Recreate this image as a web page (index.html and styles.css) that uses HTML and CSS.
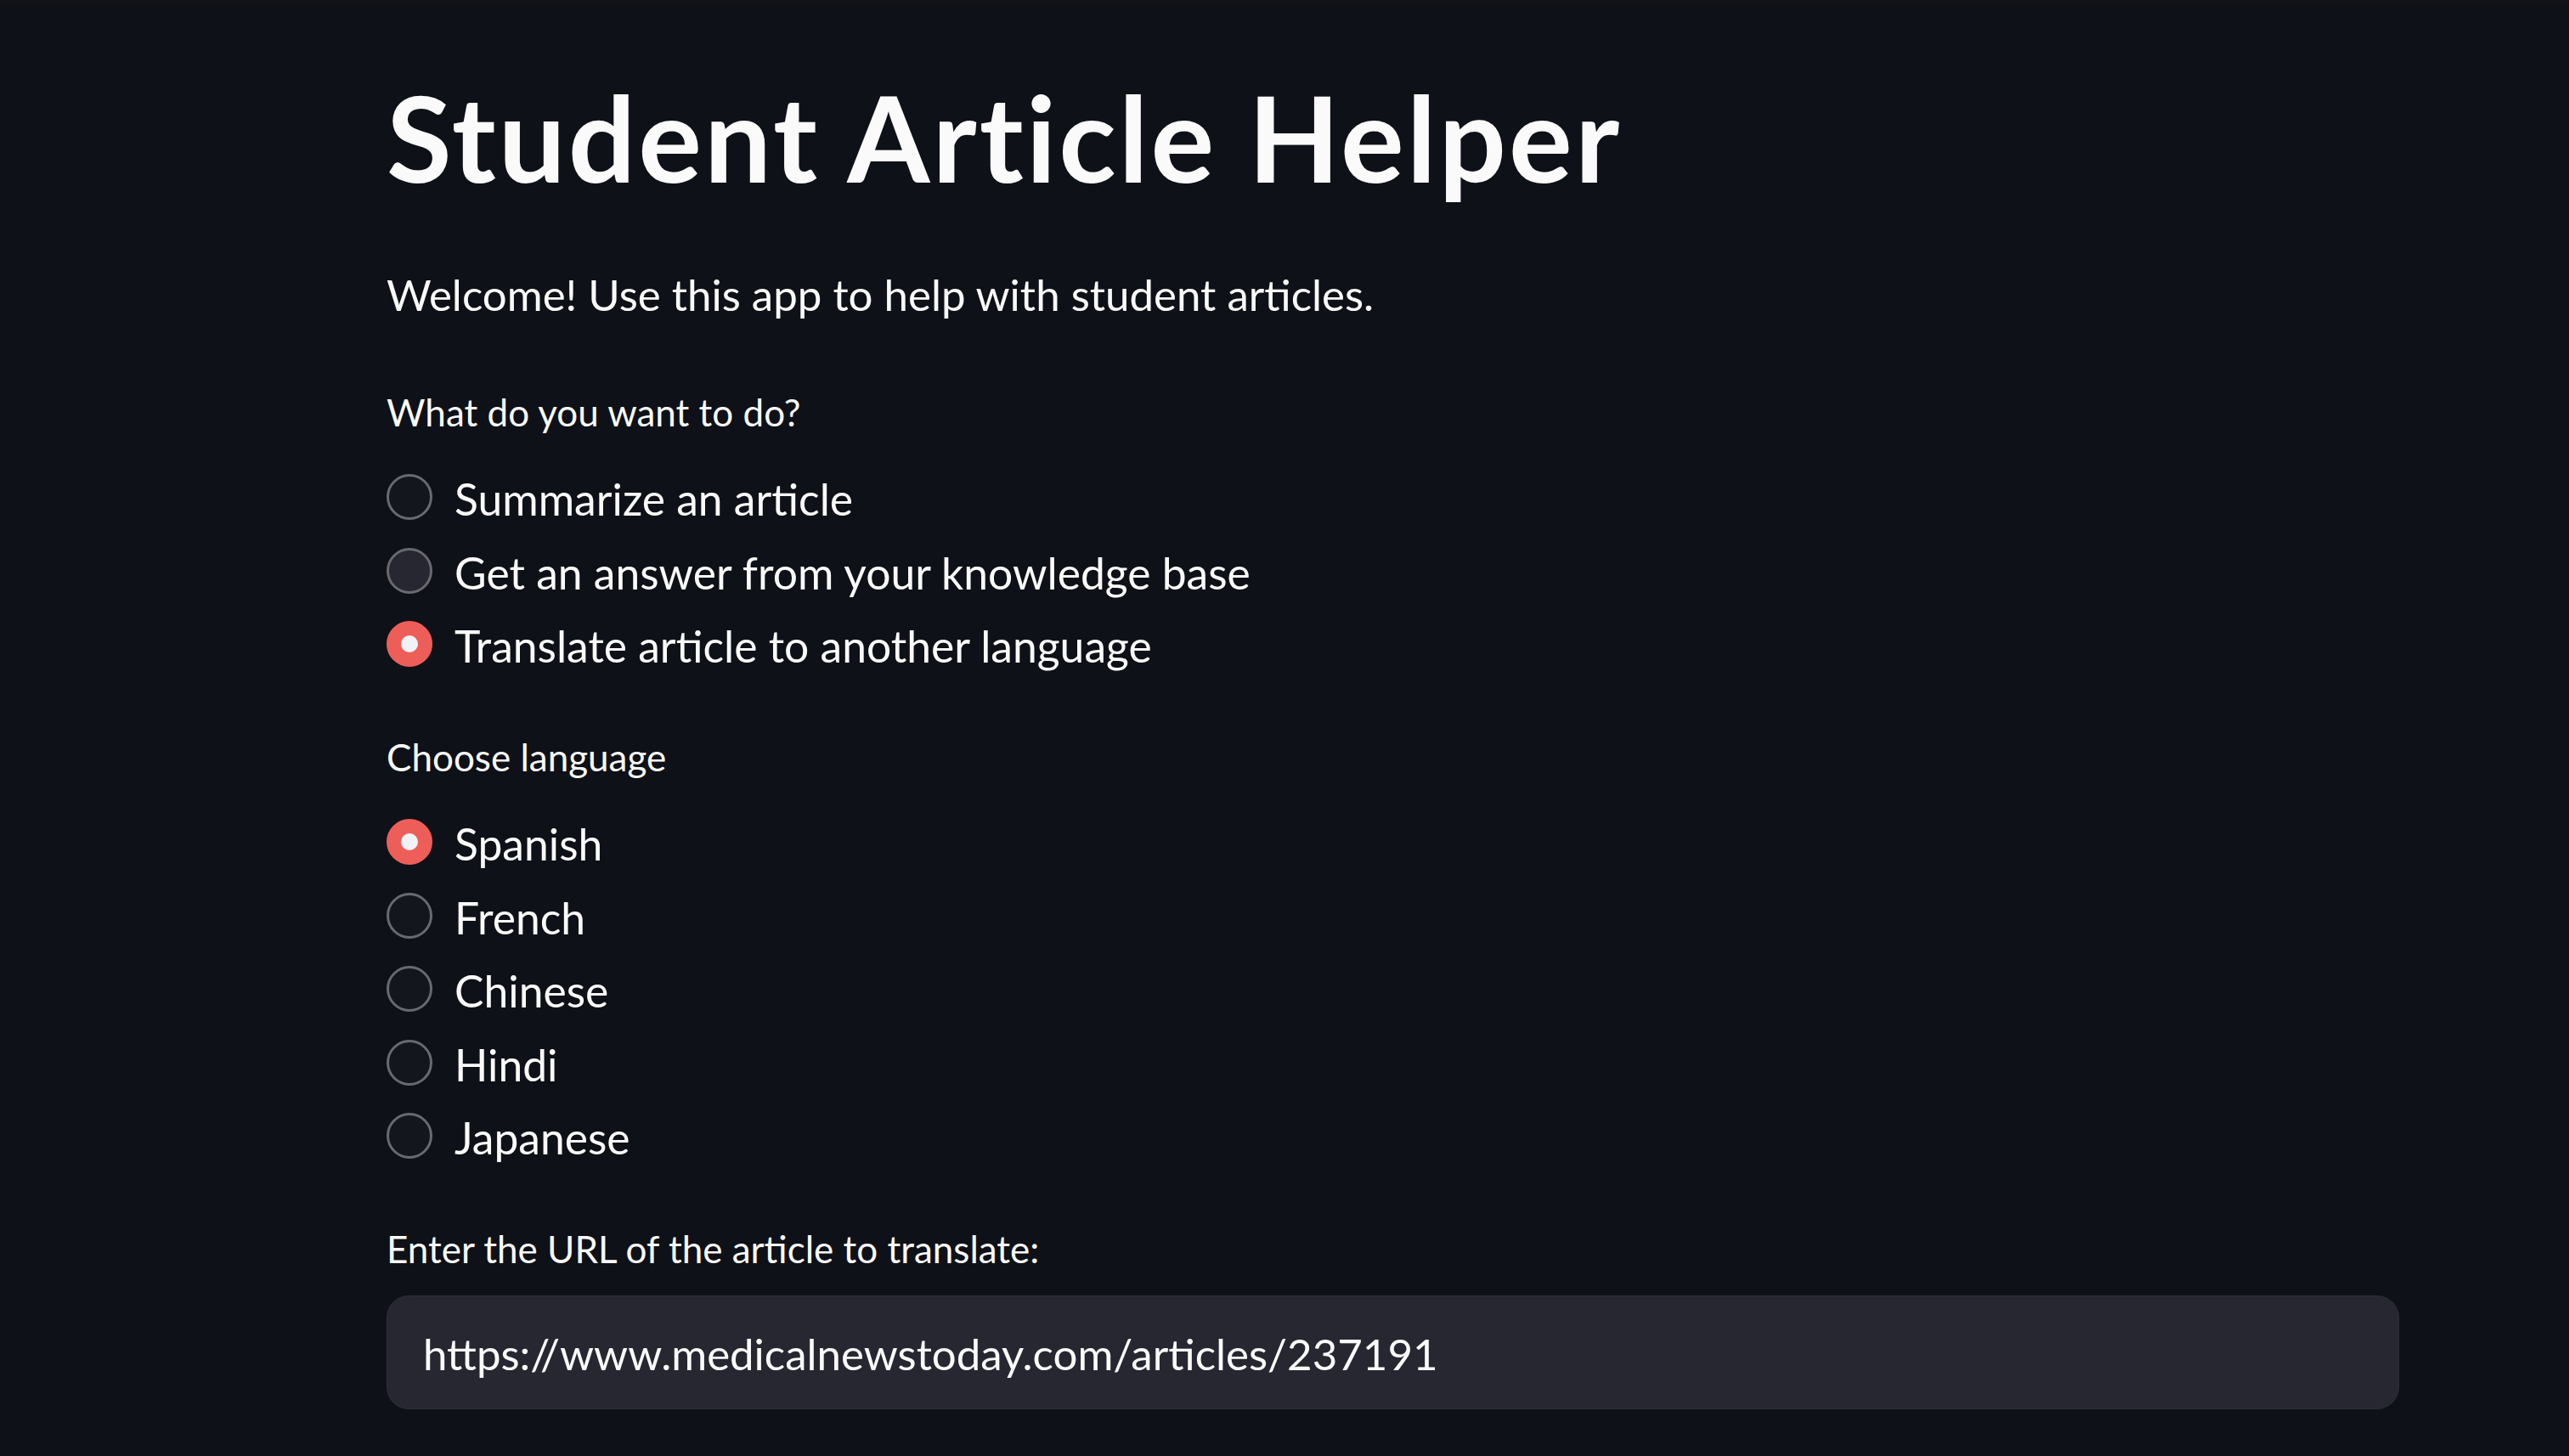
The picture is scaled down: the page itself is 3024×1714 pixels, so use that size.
FILE: index.html
```html
<!DOCTYPE html>
<html lang="en">
<head>
<meta charset="utf-8">
<title>Student Article Helper</title>
<link rel="stylesheet" href="styles.css">
</head>
<body>
<div class="top-strip"></div>
<main class="main">
  <h1 class="title">Student Article Helper</h1>
  <p class="intro">Welcome! Use this app to help with student articles.</p>

  <section class="radio-group">
    <div class="widget-label">What do you want to do?</div>
    <div class="radio-list">
      <div class="radio-row"><span class="radio"></span><span class="radio-text">Summarize an article</span></div>
      <div class="radio-row"><span class="radio radio-hover"></span><span class="radio-text">Get an answer from your knowledge base</span></div>
      <div class="radio-row"><span class="radio radio-checked"></span><span class="radio-text">Translate article to another language</span></div>
    </div>
  </section>

  <section class="radio-group">
    <div class="widget-label">Choose language</div>
    <div class="radio-list">
      <div class="radio-row"><span class="radio radio-checked"></span><span class="radio-text">Spanish</span></div>
      <div class="radio-row"><span class="radio"></span><span class="radio-text">French</span></div>
      <div class="radio-row"><span class="radio"></span><span class="radio-text">Chinese</span></div>
      <div class="radio-row"><span class="radio"></span><span class="radio-text">Hindi</span></div>
      <div class="radio-row"><span class="radio"></span><span class="radio-text">Japanese</span></div>
    </div>
  </section>

  <section class="text-field">
    <div class="widget-label">Enter the URL of the article to translate:</div>
    <div class="text-input"><span class="text-value">https://www.medicalnewstoday.com/articles/237191</span></div>
  </section>
</main>
</body>
</html>
```

FILE: styles.css
```css
html, body {
  margin: 0;
  padding: 0;
  background: #0e1117;
}

body {
  min-height: 1714px;
  color: #fafafa;
  font-family: "Lato", "Liberation Sans", sans-serif;
}

.top-strip {
  height: 5px;
  background: #111318;
}

.main {
  padding: 72px 200px 0 455px;
}

.title {
  margin: 0;
  font-size: 140px;
  line-height: 168px;
  font-weight: 700;
  letter-spacing: 3px;
}

.intro {
  margin: 61px 0 0;
  font-size: 51px;
  line-height: 82px;
}

.radio-group {
  margin-top: 62px;
}

.radio-group + .radio-group,
.radio-group + .text-field {
  margin-top: 55px;
}

.widget-label {
  font-size: 44px;
  line-height: 70px;
}

.radio-list {
  margin-top: 22px;
  display: flex;
  flex-direction: column;
}

.radio-row {
  height: 86.4px;
  display: flex;
  align-items: center;
  gap: 26px;
}

.radio {
  box-sizing: border-box;
  width: 54px;
  height: 54px;
  border-radius: 50%;
  border: 3px solid #696a70;
  background: #14161d;
  flex: none;
  display: flex;
  align-items: center;
  justify-content: center;
}

.radio-hover {
  background: #262730;
}

.radio-checked {
  border-color: #ee5e59;
  background: #ee5e59;
}

.radio-checked::after {
  content: "";
  width: 20px;
  height: 20px;
  border-radius: 50%;
  background: #f0f2f6;
}

.radio-text {
  font-size: 51.6px;
  line-height: 70px;
  margin-top: 4px;
}

.text-input {
  box-sizing: border-box;
  margin-top: 20px;
  height: 134px;
  border: 1px solid #2e2f37;
  border-radius: 26px;
  background: #262730;
  display: flex;
  align-items: center;
  padding-left: 42px;
}

.text-value {
  font-size: 51px;
  line-height: 70px;
  margin-top: 4px;
}
```
